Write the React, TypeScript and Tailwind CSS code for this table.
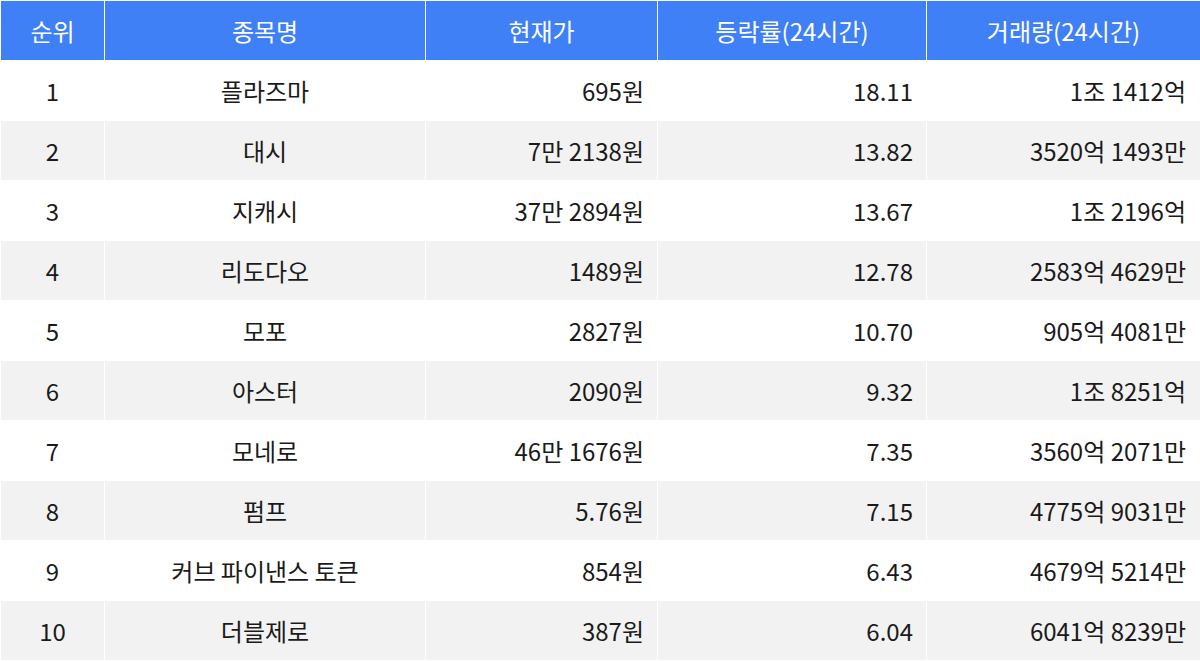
const rows = [
  ["1", "플라즈마", "695원", "18.11", "1조 1412억"],
  ["2", "대시", "7만 2138원", "13.82", "3520억 1493만"],
  ["3", "지캐시", "37만 2894원", "13.67", "1조 2196억"],
  ["4", "리도다오", "1489원", "12.78", "2583억 4629만"],
  ["5", "모포", "2827원", "10.70", "905억 4081만"],
  ["6", "아스터", "2090원", "9.32", "1조 8251억"],
  ["7", "모네로", "46만 1676원", "7.35", "3560억 2071만"],
  ["8", "펌프", "5.76원", "7.15", "4775억 9031만"],
  ["9", "커브 파이낸스 토큰", "854원", "6.43", "4679억 5214만"],
  ["10", "더블제로", "387원", "6.04", "6041억 8239만"],
];

const headers = ["순위", "종목명", "현재가", "등락률(24시간)", "거래량(24시간)"];

export default function App() {
  return (
    <div
      className="w-[1200px] h-[661px] bg-white pl-px pt-px text-[24px] text-[#1a1a1a]"
      style={{ fontFamily: '"Noto Sans CJK KR", "Noto Sans", sans-serif' }}
    >
      <div className="grid grid-cols-[103px_320px_231px_268px_273px] auto-rows-[59px] gap-px">
        {headers.map((h) => (
          <div key={h} className="bg-[#4080f6] text-white flex items-center justify-center">
            {h}
          </div>
        ))}
        {rows.map((r, i) => {
          const bg = i % 2 === 1 ? "bg-[#f2f2f2]" : "bg-white";
          return [
            <div key={`${i}-0`} className={`${bg} flex items-center justify-center`}>{r[0]}</div>,
            <div key={`${i}-1`} className={`${bg} flex items-center justify-center`}>{r[1]}</div>,
            <div key={`${i}-2`} className={`${bg} flex items-center justify-end pr-[13px]`}>{r[2]}</div>,
            <div key={`${i}-3`} className={`${bg} flex items-center justify-end pr-[13px]`}>{r[3]}</div>,
            <div key={`${i}-4`} className={`${bg} flex items-center justify-end pr-[14px]`}>{r[4]}</div>,
          ];
        })}
      </div>
    </div>
  );
}
